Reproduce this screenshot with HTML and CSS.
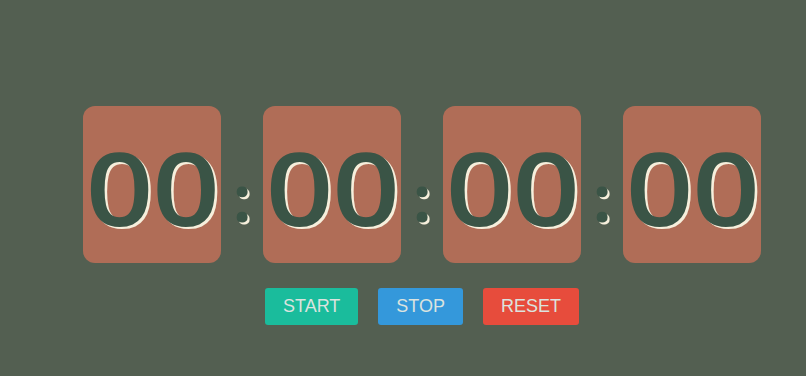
FILE: index.html
```html
<!DOCTYPE html>
<html lang="en">
<head>
  <meta charset="UTF-8" />
  <meta name="viewport" content="width=device-width, initial-scale=1.0" />
  <title>Stopwatch</title>
  <link rel="stylesheet" href="styles.css">
</head>
<body>
  <div class="watch">
    <div class="clock">
      <div class="box"><span id="hours">00</span></div>
      <span class="sep">:</span>
      <div class="box"><span id="minutes">00</span></div>
      <span class="sep">:</span>
      <div class="box"><span id="seconds">00</span></div>
      <span class="sep">:</span>
      <div class="box"><span id="ms">00</span></div>
    </div>

    <div class="controls">
      <button class="start">START</button>
      <button class="stop">STOP</button>
      <button class="reset">RESET</button>
    </div>
  </div>
</body>
</html>
```

FILE: styles.css
```css
body {
  margin: 0;
  padding: 106px 0 0 38px;
  background: #535f51;
  font-family: "Open Sans", sans-serif;
}

.watch {
  display: flex;
  flex-direction: column;
  align-items: center;
}

.clock {
  display: flex;
  align-items: center;
}

.box {
  width: 138px;
  height: 157px;
  background: #b06d57;
  border-radius: 12px;
  display: flex;
  align-items: center;
  justify-content: center;
  font-size: 102px;
  font-weight: 600;
  line-height: 1;
  color: #3a5446;
  text-shadow: 2px 2px #f6efdc;
  padding-top: 4px;
  box-sizing: border-box;
}

.box span {
  display: inline-block;
  transform: scaleX(1.16);
  letter-spacing: -1px;
}

.sep {
  width: 42px;
  text-align: center;
  font-size: 64px;
  font-weight: 700;
  line-height: 1;
  color: #3a5446;
  text-shadow: 2px 2px #f6efdc;
  padding-top: 26px;
}

.controls {
  display: flex;
  gap: 20px;
  margin-top: 25px;
}

button {
  height: 37px;
  padding: 0 18px;
  border: none;
  border-radius: 3px;
  font-family: "Liberation Sans", Arial, sans-serif;
  font-size: 18px;
  color: #dbe3df;
  cursor: pointer;
}

.start {
  background: #1abc9c;
}

.stop {
  background: #3498db;
}

.reset {
  background: #e74c3c;
}
```
